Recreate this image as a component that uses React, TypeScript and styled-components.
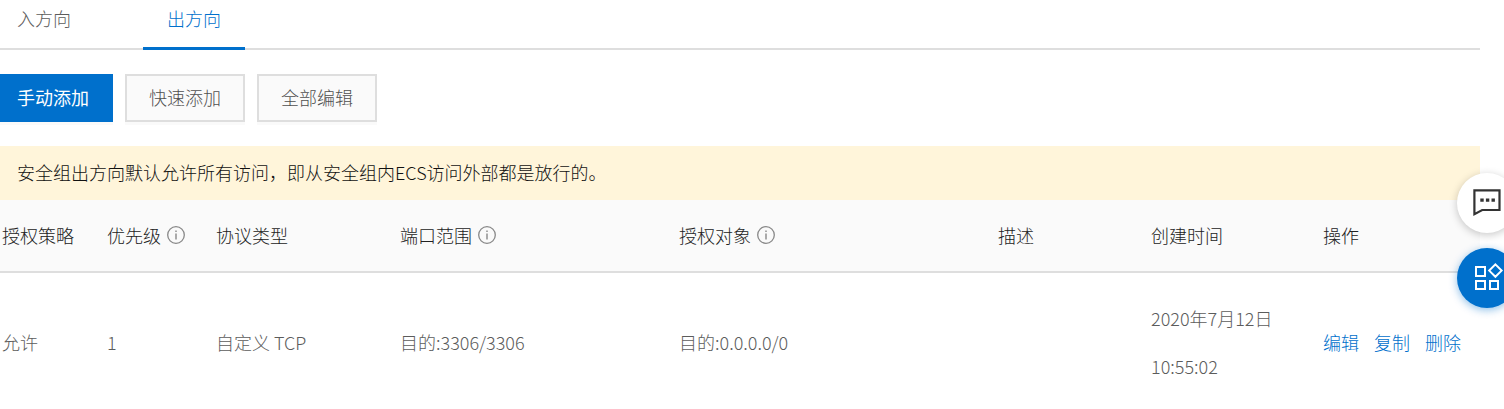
import React from 'react';
import styled, { createGlobalStyle, css } from 'styled-components';

const GlobalStyle = createGlobalStyle`
  *, *::before, *::after { box-sizing: border-box; }
  body {
    margin: 0;
    background: #fff;
    color: #5c5c5c;
    font-family: "Noto Sans CJK SC", sans-serif;
    font-size: 18px;
    font-weight: 300;
    line-height: 24px;
  }
  button { font: inherit; cursor: pointer; }
`;

const Page = styled.main`
  margin-right: 24px;
`;

const TabBar = styled.div`
  display: flex;
  gap: 48px;
  border-bottom: 2px solid #dedede;
`;

const Tab = styled.button<{ $active?: boolean }>`
  margin-bottom: -2px;
  padding: 6px 24px 17px;
  border: 0;
  border-bottom: 3px solid ${(p) => (p.$active ? '#0070cc' : 'transparent')};
  background: none;
  color: ${(p) => (p.$active ? '#0070cc' : '#5c5c5c')};

  &:first-child { padding-left: 17px; }
`;

const Toolbar = styled.div`
  display: flex;
  gap: 12px;
  padding: 24px 0;
`;

const ToolButton = styled.button<{ $primary?: boolean }>`
  height: 48px;
  padding: 0 22px 2px;
  border: 2px solid #dedede;
  background: #fafafa;
  color: #505050;
  box-shadow: 0 3px 0 #fafafa;

  ${(p) =>
    p.$primary &&
    css`
      padding: 0 24px 2px 17px;
      border: 0;
      background: #0070cc;
      color: #fff;
      font-weight: 400;
    `}
`;

const Notice = styled.p`
  margin: 0;
  padding: 14px 17px 16px;
  background: #fff5da;
  color: #111;
`;

const Table = styled.table`
  width: 100%;
  table-layout: fixed;
  border-collapse: separate;
  border-spacing: 0;
  text-align: left;
`;

const Col = styled.col<{ $width: number }>`
  width: ${(p) => p.$width}px;
`;

const HeadCell = styled.th`
  height: 73px;
  padding: 0 0 2px 2px;
  border-bottom: 2px solid #dedede;
  background: #fafafa;
  color: #222;
  font-weight: 300;
  white-space: nowrap;
`;

const HeadLabel = styled.span`
  display: inline-flex;
  align-items: center;
  gap: 6px;
`;

const Cell = styled.td`
  padding: 21px 16px 18px 2px;
  line-height: 48px;
  vertical-align: middle;
`;

const Actions = styled.div`
  display: flex;
  gap: 15px;
  white-space: nowrap;
`;

const ActionLink = styled.a`
  color: #0070cc;
  text-decoration: none;
`;

const FloatingBar = styled.aside`
  position: fixed;
  top: 173px;
  right: -13px;
  display: flex;
  flex-direction: column;
  gap: 15px;
`;

const RoundButton = styled.button<{ $primary?: boolean }>`
  display: flex;
  align-items: center;
  justify-content: center;
  width: 60px;
  height: 60px;
  padding: 0;
  border: 0;
  border-radius: 50%;
  background: ${(p) => (p.$primary ? '#0070cc' : '#fff')};
  color: ${(p) => (p.$primary ? '#fff' : '#333')};
  box-shadow: 0 2px 8px ${(p) => (p.$primary ? 'rgba(0, 112, 204, 0.45)' : 'rgba(0, 0, 0, 0.22)')};

  svg { overflow: visible; }
`;

const InfoIcon = () => (
  <svg width="18" height="18" viewBox="0 0 18 18" fill="none" stroke="#888" aria-hidden="true">
    <circle cx="9" cy="9" r="8.3" strokeWidth="1.3" />
    <path d="M9 7.5v6M9 4.5v1.6" strokeWidth="1.4" />
  </svg>
);

const ChatIcon = () => (
  <svg width="30" height="30" viewBox="0 0 30 30" fill="none" aria-hidden="true">
    <path d="M2.4 2.4H27.5V22H10.2L2.4 26.2V2.4Z" stroke="currentColor" strokeWidth="2.2" />
    <path d="M8.3 10.4h3.4v3.4H8.3zM13.9 10.4h3.4v3.4h-3.4zM19.5 10.4h3.4v3.4h-3.4z" fill="currentColor" />
  </svg>
);

const AppsIcon = () => (
  <svg width="30" height="30" viewBox="0 0 30 30" fill="none" stroke="currentColor" strokeWidth="2" aria-hidden="true">
    <path d="M4 4h9v9H4zM4 18h9v8H4zM18 18h8v8h-8zM23.4 1.4l6.2 6.2-6.2 6.2-6.2-6.2z" />
  </svg>
);

const columns = [
  { label: '授权策略', width: 105 },
  { label: '优先级', width: 109, info: true },
  { label: '协议类型', width: 184 },
  { label: '端口范围', width: 279, info: true },
  { label: '授权对象', width: 319, info: true },
  { label: '描述', width: 153 },
  { label: '创建时间', width: 172 },
  { label: '操作', width: 159 },
];

const rules = [
  {
    policy: '允许',
    priority: '1',
    protocol: '自定义 TCP',
    ports: '目的:3306/3306',
    target: '目的:0.0.0.0/0',
    description: '',
    created: '2020年7月12日 10:55:02',
  },
];

export default function App() {
  return (
    <>
      <GlobalStyle />
      <Page>
        <TabBar role="tablist">
          <Tab role="tab" aria-selected={false}>入方向</Tab>
          <Tab role="tab" aria-selected $active>出方向</Tab>
        </TabBar>
        <Toolbar>
          <ToolButton $primary>手动添加</ToolButton>
          <ToolButton>快速添加</ToolButton>
          <ToolButton>全部编辑</ToolButton>
        </Toolbar>
        <Notice>安全组出方向默认允许所有访问，即从安全组内ECS访问外部都是放行的。</Notice>
        <Table>
          <colgroup>
            {columns.map((c) => (
              <Col key={c.label} $width={c.width} />
            ))}
          </colgroup>
          <thead>
            <tr>
              {columns.map((c) => (
                <HeadCell key={c.label} scope="col">
                  <HeadLabel>
                    {c.label}
                    {c.info && <InfoIcon />}
                  </HeadLabel>
                </HeadCell>
              ))}
            </tr>
          </thead>
          <tbody>
            {rules.map((r) => (
              <tr key={r.ports}>
                <Cell>{r.policy}</Cell>
                <Cell>{r.priority}</Cell>
                <Cell>{r.protocol}</Cell>
                <Cell>{r.ports}</Cell>
                <Cell>{r.target}</Cell>
                <Cell>{r.description}</Cell>
                <Cell>{r.created}</Cell>
                <Cell>
                  <Actions>
                    <ActionLink href="#edit">编辑</ActionLink>
                    <ActionLink href="#copy">复制</ActionLink>
                    <ActionLink href="#delete">删除</ActionLink>
                  </Actions>
                </Cell>
              </tr>
            ))}
          </tbody>
        </Table>
      </Page>
      <FloatingBar>
        <RoundButton aria-label="Chat"><ChatIcon /></RoundButton>
        <RoundButton $primary aria-label="Apps"><AppsIcon /></RoundButton>
      </FloatingBar>
    </>
  );
}
